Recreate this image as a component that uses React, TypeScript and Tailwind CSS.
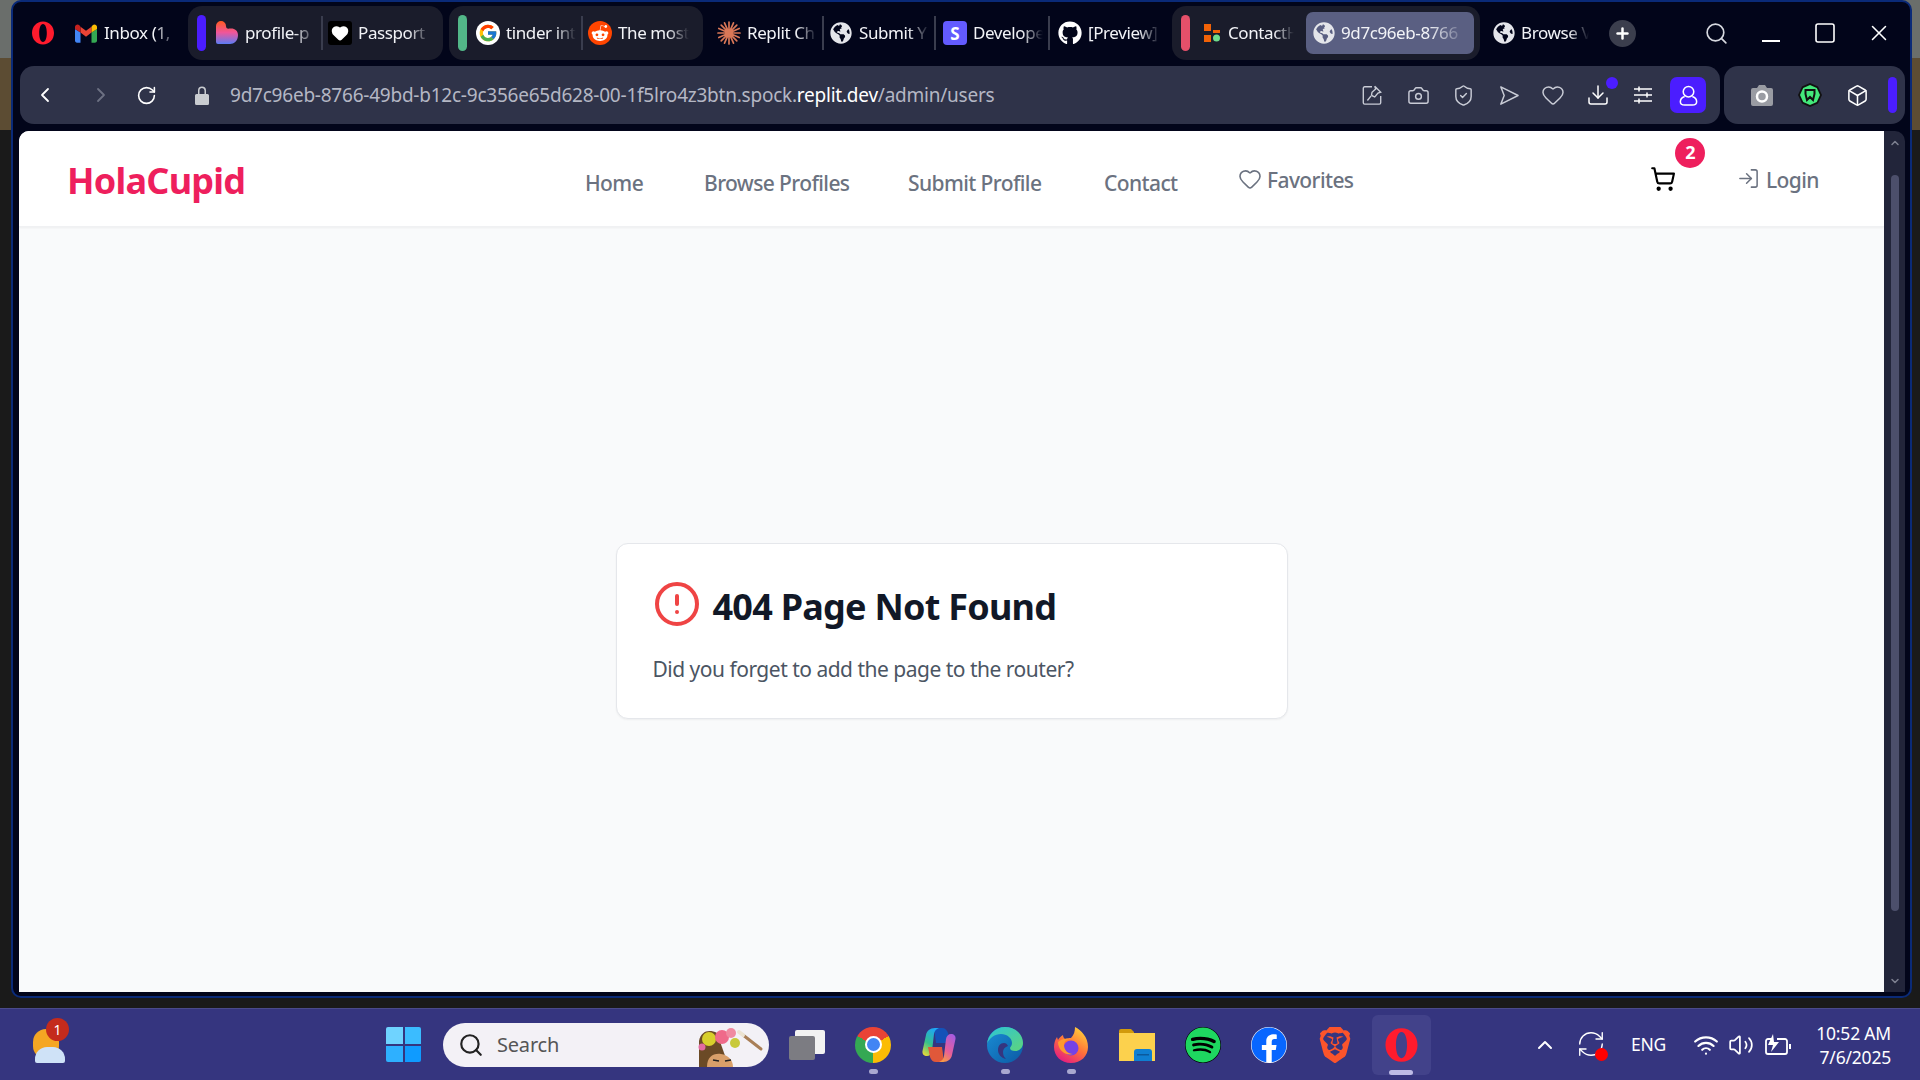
import React from "react";
import {
  Box,
  ChevronLeft,
  ChevronRight,
  ChevronUp,
  CircleAlert,
  Camera,
  Download,
  Heart,
  LogIn,
  Plus,
  RefreshCw,
  RotateCw,
  Search,
  ShieldCheck,
  ShoppingCart,
  Square,
  Volume2,
  Wifi,
  X,
} from "lucide-react";
import { FaFacebook, FaGithub, FaGlobeAmericas, FaRedditAlien, FaSpotify } from "react-icons/fa";
import { FcGoogle } from "react-icons/fc";
import { SiBrave } from "react-icons/si";

const OperaLogo = ({ className }: { className?: string }) => (
  <svg viewBox="0 0 24 24" className={className}>
    <path
      fill="#ff1b2d"
      fillRule="evenodd"
      d="M12 0.5C5.5 0.5 1 5.7 1 12s4.5 11.5 11 11.5S23 18.300 23 12 18.500 0.5 12 0.5zM12 3c2.500 0 3.800 4.200 3.800 9s-1.300 9-3.800 9-3.800-4.200-3.800-9S9.500 3 12 3z"
    />
  </svg>
);

const GmailLogo = () => (
  <svg viewBox="0 0 24 20" className="h-[19px] w-[22px]">
    <path fill="#4285f4" d="M0 5v13a2 2 0 0 0 2 2h4V9z" />
    <path fill="#34a853" d="M18 9v11h4a2 2 0 0 0 2-2V5z" />
    <path fill="#ea4335" d="M6 9V2.500L12 7l6-4.500V9l-6 4.500z" />
    <path fill="#fbbc04" d="M18 2.500V9l6-4V3c0-2.500-2.800-3.500-4.500-2.200z" />
    <path fill="#c5221f" d="M0 3v2l6 4V2.500L4.500 0.800C2.800-0.500 0 0.500 0 3z" />
  </svg>
);

const ProfileLogo = () => (
  <svg viewBox="0 0 24 24" className="size-6">
    <defs>
      <linearGradient id="profile-grad" x1="0" y1="0" x2="0" y2="1">
        <stop offset="0" stopColor="#ff5a1f" />
        <stop offset="0.5" stopColor="#f0569a" />
        <stop offset="1" stopColor="#5b7cf5" />
      </linearGradient>
    </defs>
    <path fill="url(#profile-grad)" d="M1 5a5 5 0 0 1 10 0c0 2 1 3 4 2.500 4-.6 8 1.500 8 6.500 0 6-4 9-8 9H3a2 2 0 0 1-2-2z" />
  </svg>
);

const ReplitStar = () => (
  <svg viewBox="0 0 24 24" className="size-6" stroke="#d97757" strokeWidth="1.700" strokeLinecap="round">
    <path d="M12 1v22M1 12h22M4.200 4.200l15.600 15.600M19.800 4.200L4.200 19.800M7.500 1.800l9 20.400M16.500 1.800l-9 20.400M1.800 7.500l20.400 9M22.200 7.500l-20.400 9" />
  </svg>
);

const Globe = () => <FaGlobeAmericas className="size-[22px] text-[#e4e5ea]" />;

type TabProps = {
  icon: React.ReactNode;
  label: string;
  iconBox?: string;
  textBox: string;
};

function Tab({ icon, label, iconBox = "w-[24px]", textBox }: TabProps) {
  return (
    <div className="flex shrink-0 items-center">
      <div className={`flex shrink-0 items-center justify-center ${iconBox}`}>{icon}</div>
      <span
        className={`ml-[6px] overflow-hidden whitespace-nowrap text-[17px] tracking-[-0.4px] text-[#f2f3f7] [mask-image:linear-gradient(90deg,#000_70%,transparent)] ${textBox}`}
      >
        {label}
      </span>
    </div>
  );
}

const Divider = ({ className = "mx-[5px]" }: { className?: string }) => (
  <div className={`h-[34px] w-[2px] shrink-0 bg-[#3a3d4e] ${className}`} />
);

function TabStrip() {
  return (
    <div className="flex h-[64px] shrink-0 items-start pt-[4px]">
      <div className="flex h-[54px] items-center">
        <div className="ml-[18px] w-[24px]">
          <OperaLogo className="h-[30px] w-[24px]" />
        </div>
        <div className="ml-[19px]">
          <Tab icon={<GmailLogo />} label="Inbox (1," textBox="w-[73px]" />
        </div>
      </div>

      <div className="ml-[11px] flex h-[54px] w-[255px] items-center rounded-[14px] bg-[#1a1c2b] pl-[9px]">
        <div className="mr-[9px] h-[36px] w-[9px] rounded-full bg-[#4b1dff]" />
        <Tab icon={<ProfileLogo />} label="profile-p" textBox="w-[71px]" />
        <Divider />
        <Tab
          icon={
            <div className="flex size-6 items-center justify-center rounded-[3px] bg-black">
              <Heart className="size-[18px] fill-white text-white" />
            </div>
          }
          label="Passport"
          textBox="w-[72px]"
        />
      </div>

      <div className="ml-[6px] flex h-[54px] w-[254px] items-center rounded-[14px] bg-[#1a1c2b] pl-[9px]">
        <div className="mr-[9px] h-[36px] w-[9px] rounded-full bg-[#52b788]" />
        <Tab
          icon={
            <div className="flex size-6 items-center justify-center rounded-full bg-white">
              <FcGoogle className="size-5" />
            </div>
          }
          label="tinder int"
          textBox="w-[70px]"
        />
        <Divider />
        <Tab
          icon={
            <div className="flex size-6 items-center justify-center rounded-full bg-[#ff4500]">
              <FaRedditAlien className="size-[18px] text-white" />
            </div>
          }
          label="The most"
          textBox="w-[71px]"
        />
      </div>

      <div className="ml-[14px] flex h-[54px] items-center">
        <Tab icon={<ReplitStar />} label="Replit Ch" textBox="w-[70px]" />
        <Divider />
        <Tab icon={<Globe />} label="Submit Y" textBox="w-[70px]" />
        <Divider className="ml-[5px] mr-[7px]" />
        <Tab
          icon={
            <div className="flex size-6 items-center justify-center rounded-[4px] bg-[#635bff] text-[17px] font-bold leading-none text-white">
              S
            </div>
          }
          label="Develope"
          textBox="w-[70px]"
        />
        <Divider className="ml-[5px] mr-[8px]" />
        <Tab icon={<FaGithub className="size-6 text-white" />} label="[Preview]" textBox="w-[72px]" />
      </div>

      <div className="ml-[12px] flex h-[54px] w-[308px] items-center rounded-[14px] bg-[#1a1c2b] pl-[9px]">
        <div className="mr-[14px] h-[36px] w-[9px] rounded-full bg-[#e5506a]" />
        <svg viewBox="0 0 16 18" className="h-[18px] w-[16px] shrink-0">
          <rect x="0" y="0" width="7" height="7" fill="#f26207" />
          <rect x="9" y="6" width="7" height="3" fill="#f26207" />
          <rect x="0" y="11" width="7" height="7" fill="#f26207" />
          <circle cx="12.500" cy="14" r="3.500" fill="#6fdc8c" />
        </svg>
        <span className="ml-[8px] w-[66px] overflow-hidden whitespace-nowrap text-[17px] tracking-[-0.4px] text-[#f2f3f7] [mask-image:linear-gradient(90deg,#000_70%,transparent)]">
          ContactH
        </span>
        <div className="ml-[12px] flex h-[42px] w-[168px] items-center rounded-[7px] bg-[#5a5f82] pl-[7px]">
          <Tab icon={<Globe />} iconBox="w-[22px]" label="9d7c96eb-8766" textBox="w-[125px]" />
        </div>
      </div>

      <div className="ml-[13px] flex h-[54px] items-center">
        <Tab icon={<Globe />} iconBox="w-[22px]" label="Browse V" textBox="w-[68px]" />
        <div className="ml-[20px] flex size-[27px] items-center justify-center rounded-full bg-[#3b3e4d]">
          <Plus className="size-[17px] text-white" strokeWidth={3.5} />
        </div>
        <Search className="ml-[68px] size-[25px] text-[#d6d8df]" strokeWidth={1.6} />
        <div className="ml-[33px] mt-[16px] h-[2px] w-[18px] bg-white" />
        <Square className="ml-[33px] size-[24px] text-white" strokeWidth={1.6} />
        <X className="ml-[29px] size-[26px] text-white" strokeWidth={1.4} />
      </div>
    </div>
  );
}

function AddressBar() {
  return (
    <div className="ml-[7px] flex h-[58px] shrink-0">
      <div className="flex w-[1700px] items-center rounded-[14px] bg-[#2f3349] text-[#c9ccd6]">
        <ChevronLeft className="ml-[13px] size-6 text-white" strokeWidth={1.8} />
        <ChevronRight className="ml-[32px] size-6 text-[#6d7183]" strokeWidth={1.8} />
        <RotateCw className="ml-[23px] size-[21px] text-white" strokeWidth={1.8} />
        <svg viewBox="0 0 14 19" className="ml-[38px] h-[19px] w-[14px]">
          <path fill="#c9ccd0" d="M3 8V4.500a4 4 0 0 1 8 0V8h1.500A1.500 1.500 0 0 1 14 9.500v8a1.500 1.500 0 0 1-1.500 1.500h-11A1.500 1.500 0 0 1 0 17.500v-8A1.500 1.500 0 0 1 1.500 8zm1.500 0h5V4.500a2.500 2.500 0 0 0-5 0z" />
        </svg>
        <div className="ml-[21px] w-[800px] whitespace-nowrap text-[19px] tracking-[-0.23px] text-[#b4b7c4]">
          9d7c96eb-8766-49bd-b12c-9c356e65d628-00-1f5lro4z3btn.spock.
          <span className="text-white">replit.dev</span>
          /admin/users
        </div>
        <svg viewBox="0 0 24 24" className="ml-[331px] size-[22px]" fill="none" stroke="#c9ccd6" strokeWidth="1.500">
          <path d="M12 3H4a1.500 1.500 0 0 0-1.500 1.500v16A1.500 1.500 0 0 0 4 22h16a1.500 1.500 0 0 0 1.500-1.500V13" />
          <path d="M15 2.500l6.500 6.500-3 1-3.500 4-2.500-1-1-1 .5-3 4-3.500zM11 13l-4 5" />
        </svg>
        <Camera className="ml-[24px] size-[23px]" strokeWidth={1.5} />
        <ShieldCheck className="ml-[22px] size-[23px]" strokeWidth={1.5} />
        <svg viewBox="0 0 24 24" className="ml-[22px] size-[23px]" fill="none" stroke="#c9ccd6" strokeWidth="1.500" strokeLinejoin="round">
          <path d="M4 3l18 9-18 9 3.500-9z" />
        </svg>
        <Heart className="ml-[21px] size-[24px]" strokeWidth={1.5} />
        <div className="relative ml-[21px]">
          <Download className="size-[24px] text-white" strokeWidth={1.5} />
          <div className="absolute -right-[8px] -top-[6px] h-[12px] w-[12px] rounded-full bg-[#4b1dff]" />
        </div>
        <svg viewBox="0 0 24 24" className="ml-[21px] size-[24px]" fill="none" stroke="#fff" strokeWidth="1.500">
          <path d="M3 6h18M3 12h18M3 18h18M8 3.500v5M16 9.500v5M8 15.500v5" />
        </svg>
        <div className="ml-[15px] flex h-[36px] w-[36px] items-center justify-center rounded-[7px] bg-[#4b1dff]">
          <svg viewBox="0 0 24 24" className="size-[23px]" fill="none" stroke="#fff" strokeWidth="1.600">
            <circle cx="12" cy="8" r="5.500" />
            <path d="M8 13c-3 1-4.500 3-4.500 5.500S5.500 22 8 22h8c2.500 0 4.500-1 4.500-3.500S19 14 16 13" />
          </svg>
        </div>
      </div>
      <div className="ml-[4px] flex w-[181px] items-center rounded-[14px] bg-[#2f3349]">
        <svg viewBox="0 0 24 24" className="ml-[26px] size-[24px]">
          <path fill="#9a9ca3" d="M1 7a2 2 0 0 1 2-2h4l2-3h6l2 3h4a2 2 0 0 1 2 2v14a2 2 0 0 1-2 2H3a2 2 0 0 1-2-2z" />
          <circle cx="12" cy="13.500" r="5" fill="none" stroke="#fff" strokeWidth="2.500" />
        </svg>
        <svg viewBox="0 0 24 24" className="ml-[24px] size-[24px]">
          <path fill="#111" d="M12 0l8 3.500 4 8.500-4 8.500L12 24l-8-3.500L0 12l4-8.500z" />
          <path fill="#43e97b" d="M12 2l6.800 3 3.200 7-3.200 7-6.800 3-6.800-3L2 12l3.200-7z" />
          <path fill="none" stroke="#111" strokeWidth="2" d="M7.500 7h9v4l-1.500 6-3-3-3 3-1.500-6z" />
        </svg>
        <Box className="ml-[24px] size-[23px] text-white" strokeWidth={1.6} />
        <div className="ml-[19px] h-[36px] w-[9px] rounded-full bg-[#4b1dff]" />
      </div>
    </div>
  );
}

function Navbar() {
  return (
    <nav className="flex h-[96px] shrink-0 items-center border-b border-[#f0f1f3] bg-white pl-[48px] text-[21px] font-medium tracking-[-0.6px] text-[#6b7280] shadow-[0_1px_2px_rgba(0,0,0,0.05)]">
      <div className="mt-[5px] w-[518px] text-[36px] font-bold tracking-[-0.75px] text-[#ee1f5d]">HolaCupid</div>
      <div className="mt-[10px] w-[119px]">Home</div>
      <div className="mt-[10px] w-[204px]">Browse Profiles</div>
      <div className="mt-[10px] w-[196px]">Submit Profile</div>
      <div className="mt-[10px] w-[134px]">Contact</div>
      <div className="flex w-[412px] items-center gap-[5px]">
        <Heart className="size-[24px]" strokeWidth={1.6} />
        <span className="pt-[4px]">Favorites</span>
      </div>
      <div className="relative w-[87px]">
        <ShoppingCart className="size-[26px] text-black" strokeWidth={2} />
        <div className="absolute -top-[28px] left-[25px] flex size-[30px] items-center justify-center rounded-full bg-[#ee1f5d] text-[18px] font-bold text-white">
          2
        </div>
      </div>
      <div className="flex items-center gap-[6px]">
        <LogIn className="size-[23px]" strokeWidth={1.6} />
        <span className="pt-[4px]">Login</span>
      </div>
    </nav>
  );
}

function PageView() {
  return (
    <div className="ml-[6px] flex h-[861px] shrink-0">
      <div className="flex w-[1865px] flex-col overflow-hidden rounded-tl-[10px] bg-[#f9fafb]">
        <Navbar />
        <div className="mx-auto mt-[316px] h-[176px] w-[672px] rounded-[12px] border border-[#e5e7eb] bg-white pl-[36px] pt-[36px] shadow-[0_1px_2px_rgba(0,0,0,0.05)]">
          <div className="flex h-[48px] items-start gap-[12px]">
            <CircleAlert className="size-[48px] text-[#ef4444]" strokeWidth={2} />
            <h1 className="text-[36px] font-bold leading-[53px] tracking-[-0.75px] text-[#111827]">404 Page Not Found</h1>
          </div>
          <p className="mt-[25px] text-[21px] leading-[32px] tracking-[-0.5px] text-[#4b5563]">Did you forget to add the page to the router?</p>
        </div>
      </div>
      <div className="flex w-[21px] flex-col items-center rounded-tr-[10px] bg-[#22253a]">
        <ChevronUp className="mt-[6px] size-[12px] text-[#7d8090]" strokeWidth={3} />
        <div className="mt-[26px] h-[736px] w-[8px] rounded-full bg-[#4c4f6b]" />
        <ChevronUp className="mt-[64px] size-[12px] rotate-180 text-[#7d8090]" strokeWidth={3} />
      </div>
    </div>
  );
}

const EdgeLogo = () => (
  <svg viewBox="0 0 36 36" className="size-9">
    <defs>
      <linearGradient id="edge-a" x1="0" y1="0" x2="1" y2="1">
        <stop offset="0" stopColor="#2cc4d8" />
        <stop offset="1" stopColor="#5ed47c" />
      </linearGradient>
      <linearGradient id="edge-b" x1="0" y1="0" x2="1" y2="1">
        <stop offset="0" stopColor="#1a8fd6" />
        <stop offset="1" stopColor="#0c59a4" />
      </linearGradient>
    </defs>
    <circle cx="18" cy="18" r="18" fill="url(#edge-b)" />
    <path fill="url(#edge-a)" d="M18 0c10 0 18 7 18 16 0 5-4 8-8 8-3 0-5-1-5-3 0-1 2-2 2-5 0-5-5-9-11-9C8 7 2 11 0 17 1 8 8 0 18 0z" />
    <path fill="#35357f" d="M17 16c-4 0-6 3-6 7s3 8 8 9c-2-2-3-4-3-7 0-3 2-5 5-6-1-2-2-3-4-3z" />
  </svg>
);

const FirefoxLogo = () => (
  <svg viewBox="0 0 36 36" className="size-9">
    <defs>
      <linearGradient id="fox-a" x1="0.8" y1="0" x2="0.2" y2="1">
        <stop offset="0" stopColor="#ffd43a" />
        <stop offset="0.5" stopColor="#ff7139" />
        <stop offset="1" stopColor="#e31587" />
      </linearGradient>
    </defs>
    <path fill="url(#fox-a)" d="M18 36C8 36 1 29 1 20c0-4 1-7 3-10l1 3c1-2 3-4 5-5 0 2 1 3 2 4 2-1 4-1 6-1 3-3 4-7 4-11 6 3 13 10 13 20 0 9-7 16-17 16z" />
    <circle cx="18" cy="21" r="7.500" fill="#7542e5" />
    <path fill="#ff9a2e" d="M5 15c3-3 7-4 11-3-3 1-5 3-5 6 0 5 4 9 9 9-8 2-15-4-15-12z" />
  </svg>
);

const CopilotLogo = () => (
  <svg viewBox="0 0 36 36" className="size-9">
    <defs>
      <linearGradient id="cop-a" x1="0.6" y1="0" x2="0.2" y2="1">
        <stop offset="0" stopColor="#1ea7f5" />
        <stop offset="0.55" stopColor="#36c18b" />
        <stop offset="1" stopColor="#e6d93a" />
      </linearGradient>
      <linearGradient id="cop-b" x1="0.8" y1="0" x2="0.3" y2="1">
        <stop offset="0" stopColor="#a65be0" />
        <stop offset="0.6" stopColor="#e85f9a" />
        <stop offset="1" stopColor="#f79a45" />
      </linearGradient>
    </defs>
    <path fill="#1452b8" d="M13 1h8c3 0 5 2 6 5l3 10H15z" />
    <path fill="url(#cop-a)" d="M14 1h4c-3 1-4.500 3-5 6L11 24c-.4 3-2.500 5-5 5-3 0-5-2-4.500-5L5 8c.7-4 4-7 9-7z" />
    <path fill="#e0583a" d="M23 35h-8c-3 0-5-2-6-5l-2-10h14z" />
    <path fill="url(#cop-b)" d="M22 35h-4c3-1 4.500-3 5-6l2-17c.4-3 2.500-5 5-5 3 0 5 2 4.500 5L31 28c-.7 4-4 7-9 7z" />
  </svg>
);

const TaskbarIcon = ({ children, dot }: { children: React.ReactNode; dot?: boolean }) => (
  <div className="relative flex h-full w-[66px] shrink-0 items-center justify-center">
    {children}
    {dot && <div className="absolute bottom-[6px] h-[5px] w-[9px] rounded-full bg-[#a9a8d0]" />}
  </div>
);

function Taskbar() {
  return (
    <div className="flex h-[72px] shrink-0 items-center border-t border-[#4a4a8c] bg-[#35357f]">
      <div className="relative ml-[32px] h-[36px] w-[34px]">
        <div className="absolute left-[1px] top-[2px] h-[30px] w-[26px] rounded-full bg-[#f5a623]" />
        <div className="absolute bottom-0 left-[3px] h-[16px] w-[30px] rounded-t-[12px] rounded-b-[2px] bg-[#cfe2f7]" />
        <div className="absolute -top-[9px] left-[14px] flex h-[23px] w-[23px] items-center justify-center rounded-full bg-[#c42b1c] text-[14px] text-white">
          1
        </div>
      </div>

      <div className="ml-[320px] grid size-[35px] grid-cols-2 gap-[2px]">
        <div className="rounded-tl-[2px] bg-[#6fd3ff]" />
        <div className="rounded-tr-[2px] bg-[#3bbcff]" />
        <div className="rounded-bl-[2px] bg-[#2eb0ff]" />
        <div className="rounded-br-[2px] bg-[#0f9bff]" />
      </div>

      <div className="ml-[22px] flex h-[44px] w-[326px] items-center overflow-hidden rounded-full bg-[#f3f1f6] pl-[15px]">
        <Search className="size-[26px] text-[#222]" strokeWidth={2} />
        <span className="ml-[13px] text-[20px] tracking-[-0.2px] text-[#555]">Search</span>
        <svg viewBox="0 0 70 44" className="ml-[136px] h-[44px] w-[70px] shrink-0">
          <path fill="#6b4a26" d="M4 44V18C6 8 14 6 22 10l12 34z" />
          <path fill="#d9a06a" d="M12 44c0-10 6-14 14-13 7 1 12 6 12 13z" />
          <path stroke="#222" strokeWidth="1.500" d="M18 37l6 1M30 38l6-1" />
          <circle cx="14" cy="16" r="7" fill="#d8cf2c" />
          <circle cx="27" cy="14" r="7" fill="#ef6a8a" />
          <circle cx="36" cy="10" r="5" fill="#f08aa0" />
          <circle cx="40" cy="20" r="5" fill="#c8c93a" />
          <circle cx="7" cy="24" r="3.500" fill="#e36aa0" />
          <path stroke="#a97f57" strokeWidth="3" strokeLinecap="round" d="M48 12l18 14" />
          <path stroke="#ece3d2" strokeWidth="4" strokeLinecap="round" d="M44 9l4 3" />
        </svg>
      </div>

      <div className="ml-[5px] flex h-full">
        <TaskbarIcon>
          <div className="relative size-[36px]">
            <div className="absolute right-0 top-[3px] h-[24px] w-[30px] rounded-[2px] bg-[#f2f2f2]" />
            <div className="absolute bottom-[3px] left-0 h-[24px] w-[26px] rounded-[2px] bg-[#7c7c82]" />
          </div>
        </TaskbarIcon>
        <TaskbarIcon dot>
          <div className="flex size-9 items-center justify-center rounded-full bg-[conic-gradient(#ea4335_0deg_60deg,#fbbc04_60deg_180deg,#34a853_180deg_300deg,#ea4335_300deg_360deg)]">
            <div className="size-[17px] rounded-full border-[2px] border-white bg-[#4285f4]" />
          </div>
        </TaskbarIcon>
        <TaskbarIcon>
          <CopilotLogo />
        </TaskbarIcon>
        <TaskbarIcon dot>
          <EdgeLogo />
        </TaskbarIcon>
        <TaskbarIcon dot>
          <FirefoxLogo />
        </TaskbarIcon>
        <TaskbarIcon>
          <svg viewBox="0 0 36 36" className="size-9">
            <path fill="#d29a0c" d="M0 4a2 2 0 0 1 2-2h10l3 3v6H0z" />
            <path fill="#fcd14d" d="M0 6h36v28H0z" />
            <path fill="#0f7fd1" d="M15 25a3 3 0 0 1 3-3h12a3 3 0 0 1 3 3v9H15z" />
            <path fill="#0b5a9c" d="M18 27h12v1.500H18z" />
          </svg>
        </TaskbarIcon>
        <TaskbarIcon>
          <div className="flex size-[36px] items-center justify-center rounded-full bg-black">
            <FaSpotify className="size-[36px] rounded-full text-[#1ed760]" />
          </div>
        </TaskbarIcon>
        <TaskbarIcon>
          <div className="flex size-[36px] items-center justify-center rounded-full bg-white">
            <FaFacebook className="size-[36px] text-[#0866ff]" />
          </div>
        </TaskbarIcon>
        <TaskbarIcon>
          <SiBrave className="size-9 text-[#fb542b]" />
        </TaskbarIcon>
        <TaskbarIcon>
          <div className="flex h-[60px] w-[59px] items-center justify-center rounded-[6px] bg-[#42428a]">
            <OperaLogo className="h-9 w-[35px]" />
          </div>
          <div className="absolute bottom-[5px] h-[5px] w-[24px] rounded-full bg-[#bdbbe6]" />
        </TaskbarIcon>
      </div>

      <div className="ml-[99px] flex items-center text-white">
        <ChevronUp className="size-[24px]" strokeWidth={2} />
        <div className="relative ml-[19px] size-[32px]">
          <RefreshCw className="size-[30px]" strokeWidth={1.1} />
          <div className="absolute bottom-0 right-0 size-[13px] rounded-full bg-[#ff0000]" />
        </div>
        <div className="ml-[23px] w-[36px] text-[17.5px] tracking-[-0.3px]">ENG</div>
        <Wifi className="ml-[26px] size-[26px]" strokeWidth={2} />
        <Volume2 className="ml-[9px] size-[26px]" strokeWidth={1.6} />
        <svg viewBox="0 0 26 22" className="ml-[11px] h-[22px] w-[26px]" fill="none" stroke="#fff" strokeWidth="1.800">
          <path d="M8 5H3a2 2 0 0 0-2 2v11a2 2 0 0 0 2 2h17a2 2 0 0 0 2-2V7a2 2 0 0 0-2-2h-8" />
          <path fill="#fff" stroke="none" d="M24 10h2v5h-2zM8 0L3 11h5l-2 7 8-10H9z" />
        </svg>
        <div className="ml-[14px] w-[86px] whitespace-nowrap text-right text-[17.5px] leading-[24px] tracking-[-0.2px]">
          <div>10:52 AM</div>
          <div>7/6/2025</div>
        </div>
      </div>
    </div>
  );
}

export default function App() {
  return (
    <div className="flex h-[1080px] w-[1920px] flex-col overflow-hidden bg-[#1a1a1a] bg-[linear-gradient(180deg,#6a6e6b_0,#6a6e6b_58px,#5c4c33_58px,#5c4c33_130px,#1a1a1a_130px)] font-['Noto_Sans','Open_Sans',sans-serif]">
      <div className="h-[1008px] shrink-0">
        <div className="ml-[11px] flex h-[998px] w-[1901px] flex-col rounded-[10px] border-2 border-[#0a2a78] bg-[#02051a]">
          <TabStrip />
          <AddressBar />
          <div className="h-[7px] shrink-0" />
          <PageView />
        </div>
      </div>
      <Taskbar />
    </div>
  );
}
